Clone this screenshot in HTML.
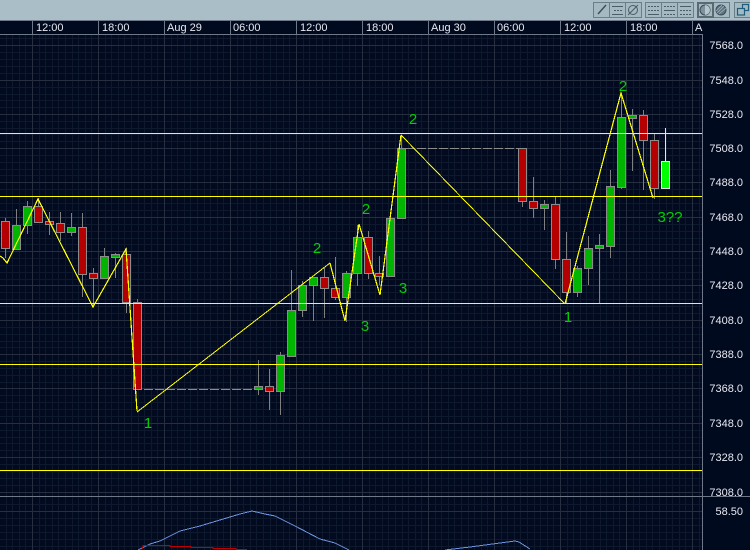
<!DOCTYPE html>
<html>
<head>
<meta charset="utf-8">
<style>
html,body{margin:0;padding:0;width:750px;height:550px;overflow:hidden;background:#020a20}
svg{display:block;font-family:"Liberation Sans",sans-serif}
.r{fill:#b40000;stroke:#8c8c8c}
.g{fill:#00b400;stroke:#8c8c8c}
.l{fill:#00d000;font-size:15px;text-anchor:middle}
.h{fill:#e8e8f0;font-size:11px}
.a{fill:#e8e8f0;font-size:11px;text-anchor:end}
.b{fill:#a5b9c3;stroke:#6a7e88}
.i{stroke:#4a5c68;fill:none}
</style>
</head>
<body>
<svg width="750" height="550" viewBox="0 0 750 550" xmlns="http://www.w3.org/2000/svg" shape-rendering="crispEdges">
<defs>
<pattern id="mv" patternUnits="userSpaceOnUse" x="32" y="0" width="66" height="10">
<path d="M7.5 0V10M13.5 0V10M20.5 0V10M26.5 0V10M33.5 0V10M40.5 0V10M46.5 0V10M53.5 0V10M59.5 0V10" stroke="#0e192d" fill="none"/>
</pattern>
</defs>
<!-- toolbar -->
<rect x="0" y="0" width="750" height="20" fill="#a9bec6"/>
<!-- plot -->
<rect x="0" y="20" width="750" height="530" fill="#000a1e"/>
<rect x="0" y="35" width="702" height="515" fill="#020a20"/>
<rect x="0" y="35" width="702" height="515" fill="url(#mv)"/>
<path fill="none" stroke="#0e192d" d="M0 38.5H702M0 52.5H702M0 59.5H702M0 66.5H702M0 73.5H702M0 87.5H702M0 94.5H702M0 100.5H702M0 107.5H702M0 121.5H702M0 128.5H702M0 134.5H702M0 141.5H702M0 155.5H702M0 162.5H702M0 169.5H702M0 175.5H702M0 189.5H702M0 196.5H702M0 203.5H702M0 210.5H702M0 224.5H702M0 231.5H702M0 238.5H702M0 244.5H702M0 258.5H702M0 265.5H702M0 272.5H702M0 279.5H702M0 292.5H702M0 299.5H702M0 306.5H702M0 313.5H702M0 327.5H702M0 334.5H702M0 341.5H702M0 347.5H702M0 361.5H702M0 368.5H702M0 375.5H702M0 382.5H702M0 395.5H702M0 402.5H702M0 409.5H702M0 416.5H702M0 430.5H702M0 437.5H702M0 443.5H702M0 450.5H702M0 464.5H702M0 471.5H702M0 478.5H702M0 485.5H702M0 504.5H702M0 518.5H702M0 525.5H702M0 532.5H702M0 539.5H702M0 546.5H702"/>
<path fill="none" stroke="#262e3f" d="M0 45.5H702M0 80.5H702M0 114.5H702M0 148.5H702M0 182.5H702M0 217.5H702M0 251.5H702M0 285.5H702M0 320.5H702M0 354.5H702M0 388.5H702M0 423.5H702M0 457.5H702M0 492.5H702M0 511.5H702M32.5 35V550M98.5 35V550M164.5 35V550M230.5 35V550M296.5 35V550M362.5 35V550M428.5 35V550M494.5 35V550M560.5 35V550M626.5 35V550M692.5 35V550"/>
<!-- header / frame lines -->
<path fill="none" stroke="#6f7888" d="M0 20.5H750M0 34.5H702M702.5 34V550M0 496.5H750M32.5 20V34M98.5 20V34M164.5 20V34M230.5 20V34M296.5 20V34M362.5 20V34M428.5 20V34M494.5 20V34M560.5 20V34M626.5 20V34M692.5 20V34"/>
<!-- header labels -->
<text class="h" x="36" y="31">12:00</text>
<text class="h" x="102" y="31">18:00</text>
<text class="h" x="167" y="31">Aug 29</text>
<text class="h" x="233" y="31">06:00</text>
<text class="h" x="300" y="31">12:00</text>
<text class="h" x="366" y="31">18:00</text>
<text class="h" x="431" y="31">Aug 30</text>
<text class="h" x="497" y="31">06:00</text>
<text class="h" x="564" y="31">12:00</text>
<text class="h" x="630" y="31">18:00</text>
<text class="h" x="695" y="31">A</text>
<!-- axis labels -->
<text class="a" x="743" y="49">7568.0</text>
<text class="a" x="743" y="84">7548.0</text>
<text class="a" x="743" y="118">7528.0</text>
<text class="a" x="743" y="152">7508.0</text>
<text class="a" x="743" y="186">7488.0</text>
<text class="a" x="743" y="221">7468.0</text>
<text class="a" x="743" y="255">7448.0</text>
<text class="a" x="743" y="289">7428.0</text>
<text class="a" x="743" y="324">7408.0</text>
<text class="a" x="743" y="358">7388.0</text>
<text class="a" x="743" y="392">7368.0</text>
<text class="a" x="743" y="427">7348.0</text>
<text class="a" x="743" y="461">7328.0</text>
<text class="a" x="743" y="496">7308.0</text>
<text class="a" x="743" y="515">58.50</text>
<!-- wicks -->
<path fill="none" stroke="#808080" d="M5.5 218V258M16.5 209V249M27.5 201V234M38.5 198V222M49.5 212V235M60.5 212V241M71.5 213V236M82.5 213V297M93.5 268V307M104.5 248V278M115.5 253V278M126.5 248V313M137.5 299V389M258.5 360V395M269.5 369V410M280.5 352V415M291.5 270V356M302.5 281V317M313.5 277V321M324.5 268V318M335.5 257V300M346.5 271V322M357.5 225V286M368.5 231V279M379.5 256V285M390.5 218V277M401.5 135V219M522.5 148V207M533.5 177V218M544.5 200V230M555.5 197V269M566.5 232V303M577.5 266V297M588.5 236V285M599.5 234V303M610.5 170V258M621.5 93V189M632.5 109V171M643.5 110V190M654.5 133V199"/>
<path fill="none" stroke="#e8e8e8" d="M665.5 128V161"/>
<!-- bodies -->
<rect class="r" x="1.5" y="221.5" width="8" height="27"/>
<rect class="g" x="12.5" y="225.5" width="8" height="24"/>
<rect class="g" x="23.5" y="206.5" width="8" height="19"/>
<rect class="r" x="34.5" y="206.5" width="8" height="16"/>
<rect class="r" x="45.5" y="221.5" width="8" height="3"/>
<rect class="r" x="56.5" y="223.5" width="8" height="9"/>
<rect class="g" x="67.5" y="227.5" width="8" height="5"/>
<rect class="r" x="78.5" y="227.5" width="8" height="47"/>
<rect class="r" x="89.5" y="273.5" width="8" height="5"/>
<rect class="g" x="100.5" y="256.5" width="8" height="22"/>
<rect class="g" x="111.5" y="254.5" width="8" height="3"/>
<rect class="r" x="122.5" y="254.5" width="8" height="48"/>
<rect class="r" x="133.5" y="302.5" width="8" height="87"/>
<rect class="g" x="254.5" y="386.5" width="8" height="3"/>
<rect class="r" x="265.5" y="386.5" width="8" height="5"/>
<rect class="g" x="276.5" y="355.5" width="8" height="36"/>
<rect class="g" x="287.5" y="310.5" width="8" height="46"/>
<rect class="g" x="298.5" y="285.5" width="8" height="25"/>
<rect class="g" x="309.5" y="277.5" width="8" height="8"/>
<rect class="r" x="320.5" y="277.5" width="8" height="11"/>
<rect class="r" x="331.5" y="288.5" width="8" height="9"/>
<rect class="g" x="342.5" y="273.5" width="8" height="24"/>
<rect class="g" x="353.5" y="237.5" width="8" height="36"/>
<rect class="r" x="364.5" y="237.5" width="8" height="36"/>
<rect class="r" x="375.5" y="273.5" width="8" height="3"/>
<rect class="g" x="386.5" y="218.5" width="8" height="58"/>
<rect class="g" x="397.5" y="148.5" width="8" height="70"/>
<rect class="r" x="518.5" y="148.5" width="8" height="53"/>
<rect class="r" x="529.5" y="201.5" width="8" height="7"/>
<rect class="g" x="540.5" y="204.5" width="8" height="4"/>
<rect class="r" x="551.5" y="204.5" width="8" height="55"/>
<rect class="r" x="562.5" y="259.5" width="8" height="33"/>
<rect class="g" x="573.5" y="268.5" width="8" height="24"/>
<rect class="g" x="584.5" y="248.5" width="8" height="20"/>
<rect class="g" x="595.5" y="245.5" width="8" height="3"/>
<rect class="g" x="606.5" y="186.5" width="8" height="60"/>
<rect class="g" x="617.5" y="117.5" width="8" height="70"/>
<rect class="g" x="628.5" y="115.5" width="8" height="3"/>
<rect class="r" x="639.5" y="115.5" width="8" height="25"/>
<rect class="r" x="650.5" y="140.5" width="8" height="48"/>
<rect x="661.5" y="161.5" width="8" height="27" fill="#00ff00" stroke="#e0e0e0"/>
<!-- dashed -->
<path fill="none" stroke="#8c8c8c" stroke-dasharray="9 2" d="M144 389.5H254M406 148.5H518"/>
<!-- horizontal yellow -->
<path fill="none" stroke="#ffff00" d="M0 133.5H702M0 196.5H702M0 303.5H702M0 364.5H702M0 470.5H702"/>
<!-- zigzag -->
<polyline fill="none" stroke="#ffff00" stroke-width="1.2" points="0,256 3,258 7,263 38,199 93,307 126,249 137,411"/>
<polyline fill="none" stroke="#ffff00" stroke-width="1" points="137,412 330,263"/>
<polyline fill="none" stroke="#ffff00" stroke-width="1.2" points="330,263 345,321 359,224 380,295 401,135"/>
<polyline fill="none" stroke="#ffff00" stroke-width="1" points="401,135 565,304"/>
<polyline fill="none" stroke="#ffff00" stroke-width="1.2" points="565,304 621,93 653,198"/>
<!-- green labels -->
<text class="l" x="413" y="124">2</text>
<text class="l" x="366" y="214">2</text>
<text class="l" x="317" y="253">2</text>
<text class="l" x="403" y="293">3</text>
<text class="l" x="365" y="331">3</text>
<text class="l" x="148" y="428">1</text>
<text class="l" x="568" y="322">1</text>
<text class="l" x="623" y="91">2</text>
<text class="l" x="670" y="222">3??</text>
<!-- lower panel lines -->
<polyline fill="none" stroke="#6c94e0" points="138,550 150,544 160,541 180,531 200,526 220,520 240,514 252,511 265,514 275,516 295,526 320,539 335,543 349,550"/>
<polyline fill="none" stroke="#6c94e0" points="445,550 470,547 500,543 515,541 519,542 530,549"/>
<path fill="none" stroke="#c00000" d="M142 549.5L143 545.5H170V546.5H191V547.5H213V548.5H236V549.5H247"/>
<!-- toolbar buttons -->
<rect class="b" x="593.5" y="2.5" width="48" height="15"/>
<path stroke="#6a7e88" d="M609.5 3V17M625.5 3V17"/>
<rect class="b" x="645.5" y="2.5" width="48" height="15"/>
<path stroke="#6a7e88" d="M661.5 3V17M677.5 3V17"/>
<rect class="b" x="697.5" y="2.5" width="32" height="15"/>
<path stroke="#5a6a72" fill="none" stroke-width="2" d="M698 3H713V17H698Z"/>
<rect class="b" x="734.5" y="2.5" width="16" height="15"/>
<g shape-rendering="auto">
<path stroke="#3c4c58" stroke-width="1.4" d="M598 14L606 5"/>
<path class="i" d="M612 6.500H623M612 14.500H623"/>
<path class="i" stroke-dasharray="2 1" d="M614 10.500H622"/>
<circle class="i" cx="633" cy="10" r="4.500"/>
<path class="i" d="M628 15L638 5"/>
<path class="i" stroke-dasharray="2 1" d="M648 6.500H659M648 10.500H659"/>
<path class="i" d="M648 14.500H659"/>
<path class="i" stroke-dasharray="2 1" d="M664 6.500H675M664 14.500H675"/>
<path class="i" d="M664 10.500H675"/>
<path class="i" d="M680 6.500H691"/>
<path class="i" stroke-dasharray="2 1" d="M680 10.500H691M680 14.500H691"/>
<circle cx="705" cy="10" r="5" fill="#7d929d" stroke="#3c4c58"/>
<path d="M705 5A5 5 0 0 1 705 15Z" fill="#b6c6cd"/>
<circle cx="721" cy="10" r="5" fill="#60747f" stroke="#3c4c58"/>
<path stroke="#a5b9c3" stroke-width=".7" d="M717 13L724 6M719 14L726 8M716 11L722 5"/>
<rect x="742.5" y="4.5" width="6" height="6" fill="#a5b9c3" stroke="#1f5d7a" stroke-width="1.2"/>
<rect x="737.5" y="8.5" width="7" height="6.500" fill="#a5b9c3" stroke="#1f5d7a" stroke-width="1.2"/>
</g>
</svg>
</body>
</html>
